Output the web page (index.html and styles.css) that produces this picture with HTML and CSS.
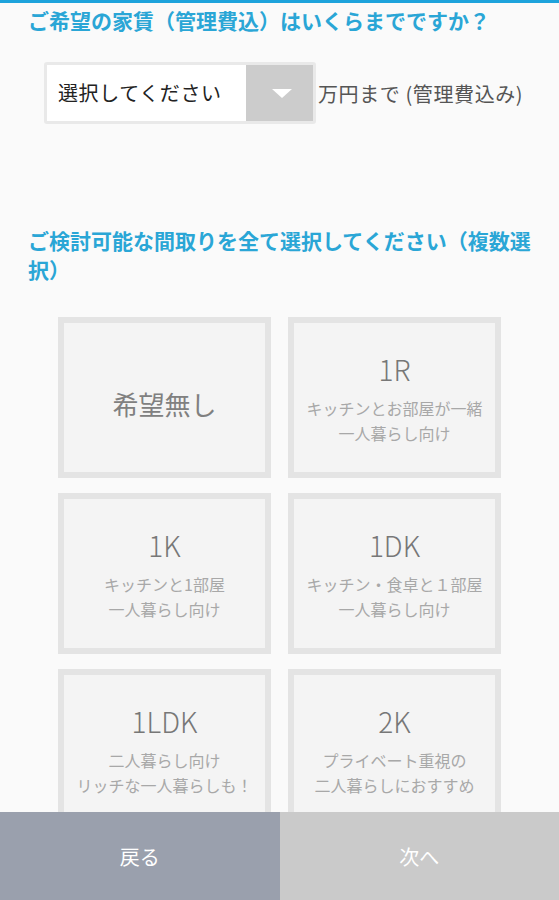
FILE: index.html
```html
<!DOCTYPE html>
<html lang="ja">
<head>
  <meta charset="UTF-8" />
  <meta name="viewport" content="width=device-width, initial-scale=1.0"/>
  <title>お部屋探し - 条件入力</title>
  <link rel="stylesheet" href="styles.css">
</head>
<body>
  <div class="topbar"></div>

  <div class="section">
    <h2 class="question q-rent">ご希望の家賃（管理費込）はいくらまでですか？</h2>
    <div class="rent-row">
      <div class="select-box">
        <div class="select-value">選択してください</div>
        <div class="select-arrow"><span class="triangle"></span></div>
      </div>
      <span class="rent-unit">万円まで (管理費込み)</span>
    </div>
  </div>

  <div class="section">
    <h2 class="question q-layout">ご検討可能な間取りを全て選択してください（複数選択）</h2>
    <div class="card-grid">
      <div class="card">
        <div class="card-none">希望無し</div>
      </div>
      <div class="card">
        <div class="card-type">1R</div>
        <div class="card-desc">キッチンとお部屋が一緒<br>一人暮らし向け</div>
      </div>
      <div class="card">
        <div class="card-type">1K</div>
        <div class="card-desc">キッチンと1部屋<br>一人暮らし向け</div>
      </div>
      <div class="card">
        <div class="card-type">1DK</div>
        <div class="card-desc">キッチン・食卓と１部屋<br>一人暮らし向け</div>
      </div>
      <div class="card">
        <div class="card-type">1LDK</div>
        <div class="card-desc">二人暮らし向け<br>リッチな一人暮らしも！</div>
      </div>
      <div class="card">
        <div class="card-type">2K</div>
        <div class="card-desc">プライベート重視の<br>二人暮らしにおすすめ</div>
      </div>
    </div>
  </div>

  <div class="footer-nav">
    <button class="nav-btn back">戻る</button>
    <button class="nav-btn next">次へ</button>
  </div>
</body>
</html>
```

FILE: styles.css
```css
* {
  box-sizing: border-box;
}
body {
  margin: 0;
  padding: 0;
  background: #fafafa;
  font-family: "Noto Sans CJK JP", "Noto Sans", sans-serif;
  color: #333;
}
.topbar {
  height: 3px;
  background: #1ea3dc;
}
.question {
  margin: 0;
  padding: 0 16px 0 28px;
  font-size: 21px;
  line-height: 29px;
  font-weight: bold;
  color: #2aa6d6;
}
.q-rent { margin-top: 3px; }

.rent-row {
  display: flex;
  align-items: center;
  margin: 27px 0 0 44px;
  height: 62px;
}
.select-box {
  display: flex;
  width: 272px;
  height: 62px;
  border: 3px solid #e9e9e9;
  border-radius: 3px;
}
.select-value {
  flex: 1;
  background: #fff;
  padding-left: 11px;
  font-size: 20px;
  line-height: 56px;
  letter-spacing: 0.6px;
  color: #222;
}
.select-arrow {
  width: 67px;
  background: #cccccc;
  display: flex;
  align-items: center;
  justify-content: center;
}
.triangle {
  width: 0;
  height: 0;
  border-left: 10px solid transparent;
  border-right: 10px solid transparent;
  border-top: 9px solid #fff;
  margin-left: 4px;
}
.rent-unit {
  margin-left: 2px;
  font-size: 20px;
  letter-spacing: 0.6px;
  color: #555;
  white-space: nowrap;
}

.q-layout { margin-top: 102px; }

.card-grid {
  display: grid;
  grid-template-columns: 213px 213px;
  column-gap: 17px;
  row-gap: 15px;
  margin: 33px 0 0 58px;
  padding-bottom: 100px;
}
.card {
  height: 161px;
  border: 6px solid #e4e4e4;
  background: #f4f4f4;
  display: flex;
  flex-direction: column;
  align-items: center;
  justify-content: center;
  padding-top: 2px;
  text-align: center;
}
.card-none {
  font-size: 26px;
  color: #808080;
  margin-top: 10px;
}
.card-type {
  font-size: 28px;
  font-weight: 300;
  line-height: 36px;
  color: #777;
  margin-bottom: 9px;
}
.card-desc {
  font-size: 16px;
  line-height: 25px;
  color: #a8a8a8;
}

.footer-nav {
  position: fixed;
  left: 0;
  right: 0;
  bottom: 0;
  height: 88px;
  display: flex;
}
.nav-btn {
  flex: 1;
  border: none;
  margin: 0;
  font-family: inherit;
  font-size: 20px;
  color: #fff;
  cursor: pointer;
}
.nav-btn.back { background: #9aa0ad; }
.nav-btn.next { background: #cacaca; }
```
